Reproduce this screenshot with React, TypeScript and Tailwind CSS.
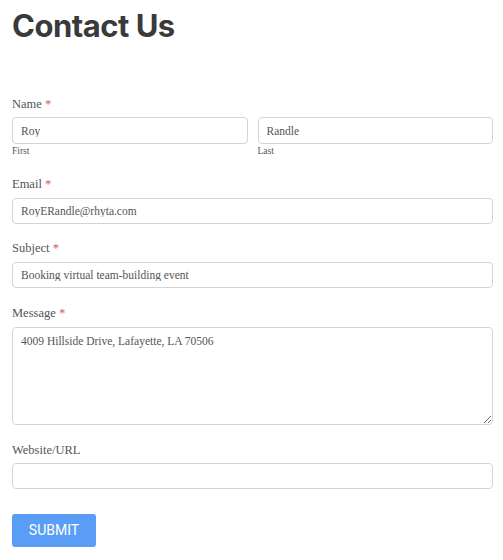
export default function App() {
  const serif = { fontFamily: '"Liberation Serif", "DejaVu Serif", serif' }
  const inputCls =
    "block w-full h-[26px] rounded-[4px] border border-[#d4d4d4] bg-white px-[8px] text-[11.5px] text-[#555] outline-none"
  const labelCls = "block text-[12.5px] leading-[16px] text-[#555]"

  return (
    <main className="min-h-screen bg-white px-[12px] pt-[6px]" style={serif}>
      <h1
        className="text-[31px] font-bold leading-[40px] text-[#3a3a3a] tracking-[-0.5px]"
        style={{ fontFamily: 'Inter, "Liberation Sans", sans-serif' }}
      >
        Contact Us
      </h1>

      <form className="mt-[50px] w-[481px]" onSubmit={(e) => e.preventDefault()}>
        {/* Name */}
        <label className={labelCls}>
          Name <span className="text-[#d05a5a]">*</span>
        </label>
        <div className="mt-[5px] grid grid-cols-2 gap-[10px]">
          <div>
            <input className={`${inputCls} h-[27px]`} defaultValue="Roy" style={serif} />
            <p className="mt-[1px] text-[9.5px] leading-[12px] text-[#555]">First</p>
          </div>
          <div>
            <input className={`${inputCls} h-[27px]`} defaultValue="Randle" style={serif} />
            <p className="mt-[1px] text-[9.5px] leading-[12px] text-[#555]">Last</p>
          </div>
        </div>

        {/* Email */}
        <label className={`${labelCls} mt-[19px]`}>
          Email <span className="text-[#d05a5a]">*</span>
        </label>
        <input className={`${inputCls} mt-[6px]`} defaultValue="RoyERandle@rhyta.com" style={serif} />

        {/* Subject */}
        <label className={`${labelCls} mt-[16px]`}>
          Subject <span className="text-[#d05a5a]">*</span>
        </label>
        <input className={`${inputCls} mt-[6px]`} defaultValue="Booking virtual team-building event" style={serif} />

        {/* Message */}
        <label className={`${labelCls} mt-[17px]`}>
          Message <span className="text-[#d05a5a]">*</span>
        </label>
        <textarea
          className="mt-[6px] block h-[98px] w-full rounded-[4px] border border-[#d4d4d4] bg-white px-[8px] py-[5px] text-[11.5px] leading-[16px] text-[#555] outline-none"
          defaultValue="4009 Hillside Drive, Lafayette, LA 70506"
          style={serif}
        />

        {/* Website */}
        <label className={`${labelCls} mt-[17px]`}>Website/URL</label>
        <input className={`${inputCls} mt-[5px]`} style={serif} />

        <button
          type="submit"
          className="mt-[25px] block h-[33px] w-[84px] rounded-[3px] bg-[#5a9df7] text-[14px] text-white"
          style={{ fontFamily: 'Roboto, "Liberation Sans", sans-serif' }}
        >
          SUBMIT
        </button>
      </form>
    </main>
  )
}
